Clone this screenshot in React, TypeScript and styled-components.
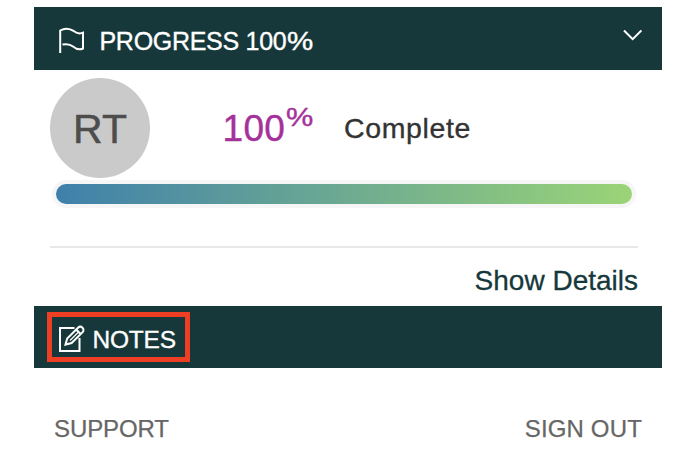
import React from "react";
import styled, { createGlobalStyle } from "styled-components";

const GlobalStyle = createGlobalStyle`
  * { box-sizing: border-box; }
  body {
    margin: 0;
    background: #fff;
    font-family: "Liberation Sans", Arial, Helvetica, sans-serif;
  }
`;

const Panel = styled.main`
  width: 628px;
  height: 466px;
  margin-left: 34px;
  padding-top: 7px;
  overflow: hidden;
`;

const ProgressHeader = styled.header`
  display: flex;
  align-items: flex-start;
  height: 63px;
  padding: 19px 20px 0 24px;
  background: #17383a;
  color: #fff;
`;

const HeaderTitle = styled.h2`
  display: flex;
  flex: 1;
  margin: 0 0 0 13.5px;
  font-size: 25px;
  font-weight: 400;
  line-height: 31px;
  white-space: pre;
  -webkit-text-stroke: 0.35px currentColor;
`;

const HeaderWord = styled.span<{ $spacing: number }>`
  letter-spacing: ${(p) => p.$spacing}px;
`;

const WidePercent = styled.span`
  display: inline-block;
  transform: scaleX(1.18);
  transform-origin: left;
`;

const FlagIcon = styled.svg`
  width: 28px;
  height: 28px;
  flex: none;
`;

const ChevronIcon = styled.svg`
  width: 20px;
  height: 14px;
  margin-top: 2px;
`;

const ProgressBody = styled.section`
  height: 236px;
  padding: 8px 24px 0 16px;
`;

const Summary = styled.div`
  display: flex;
  height: 100px;
`;

const Avatar = styled.div`
  width: 100px;
  height: 100px;
  border-radius: 50%;
  background: #cacaca;
  color: #4d4d4d;
  font-size: 41px;
  line-height: 102px;
  text-align: center;
  -webkit-text-stroke: 0.5px currentColor;
`;

const Amount = styled.div`
  display: flex;
  width: 123px;
  margin-left: 71px;
  padding-left: 1.5px;
  color: #a5329a;
  font-size: 37px;
  letter-spacing: 0.3px;
  line-height: 101px;
  -webkit-text-stroke: 0.4px currentColor;
`;

const Superscript = styled.span`
  margin-left: 0.5px;
  font-size: 26px;
  line-height: 78px;
`;

const Status = styled.div`
  color: #333;
  font-size: 28.5px;
  letter-spacing: 0.62px;
  line-height: 101px;
  -webkit-text-stroke: 0.35px currentColor;
`;

const Track = styled.div`
  width: 584px;
  height: 28px;
  margin: 2px 0 0 2px;
  padding: 4px;
  border-radius: 14px;
  background: #f6f6f6;
`;

const Fill = styled.div`
  height: 20px;
  border-radius: 10px;
  background: linear-gradient(90deg, #3f80ab, #9bd477);
`;

const Details = styled.div`
  width: 588px;
  margin-top: 38px;
  border-top: 2px solid #e8e8e8;
  color: #17383a;
  font-size: 28px;
  line-height: 66px;
  text-align: right;
  -webkit-text-stroke: 0.3px currentColor;
`;

const NotesBar = styled.section`
  height: 62px;
  padding: 6px 13px;
  background: #17383a;
`;

const NotesButton = styled.div`
  display: flex;
  width: 143px;
  height: 50px;
  padding: 7px 0 0 6px;
  border: 5px solid #ee3e23;
  color: #fff;
  font-size: 24.5px;
  letter-spacing: -0.2px;
  line-height: 31px;
  -webkit-text-stroke: 0.35px currentColor;
`;

const NoteIcon = styled.svg`
  width: 28px;
  height: 30px;
  margin-right: 6.5px;
`;

const Footer = styled.footer`
  display: flex;
  justify-content: space-between;
  padding: 46px 20px 0;
  color: #666;
  font-size: 24px;
  line-height: 30px;
  -webkit-text-stroke: 0.25px currentColor;
`;

const FooterLink = styled.span<{ $spacing: number }>`
  letter-spacing: ${(p) => p.$spacing}px;
`;

export default function App() {
  return (
    <>
      <GlobalStyle />
      <Panel>
        <ProgressHeader>
          <FlagIcon viewBox="0 0 28 28" fill="none" stroke="currentColor" strokeWidth="2">
            <path d="M2.2 27V4.5C8 1 13 3.2 16 5.2C19 7.5 22 8 25 6.7V22.5C21 24.5 18 23 15 20.5C12 18 9 17.6 4.5 18.6" />
          </FlagIcon>
          <HeaderTitle>
            <HeaderWord $spacing={-0.3}>PROGRESS </HeaderWord>
            <HeaderWord $spacing={-0.2}>100</HeaderWord>
            <WidePercent>%</WidePercent>
          </HeaderTitle>
          <ChevronIcon viewBox="0 0 20 14" fill="none" stroke="currentColor" strokeWidth="2">
            <path d="M2 2.5L10.7 11.2L19.4 2.5" />
          </ChevronIcon>
        </ProgressHeader>
        <ProgressBody>
          <Summary>
            <Avatar>RT</Avatar>
            <Amount>
              100
              <Superscript><WidePercent>%</WidePercent></Superscript>
            </Amount>
            <Status>Complete</Status>
          </Summary>
          <Track><Fill /></Track>
          <Details>Show Details</Details>
        </ProgressBody>
        <NotesBar>
          <NotesButton>
            <NoteIcon viewBox="0 0 28 30" fill="none" stroke="currentColor" strokeWidth="2">
              <path d="M16.5 4H2V27H21.5V14" />
              <path d="M7.5 20.5L9.2 14.5L20 3.7C21.3 2.5 23.1 2.4 24.5 3.7C25.9 5 25.8 7 24.4 8.4L13.6 19L7.5 20.5ZM18.2 5.5L22.6 10" />
              <path d="M12 16.5L20 8.5" strokeWidth="1.2" />
            </NoteIcon>
            NOTES
          </NotesButton>
        </NotesBar>
        <Footer>
          <FooterLink $spacing={-0.1}>SUPPORT</FooterLink>
          <FooterLink $spacing={0.15}>SIGN OUT</FooterLink>
        </Footer>
      </Panel>
    </>
  );
}
